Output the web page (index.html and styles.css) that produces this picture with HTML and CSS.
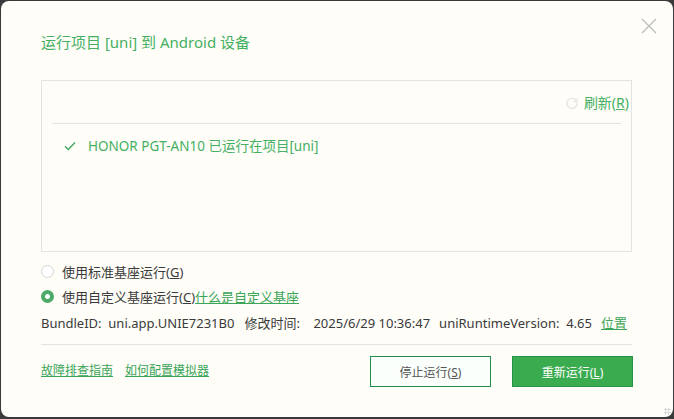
FILE: index.html
```html
<!DOCTYPE html>
<html lang="zh">
<head>
<meta charset="utf-8">
<link rel="stylesheet" href="styles.css">
</head>
<body>
<div class="dialog">
  <div class="header">
    <h1 class="title">运行项目 [uni] 到 Android 设备</h1>
    <span class="close" aria-label="close">
      <svg width="16" height="16" viewBox="0 0 16 16"><path d="M1 1L15 15M15 1L1 15" stroke="#b9b9b9" stroke-width="1.1" fill="none"/></svg>
    </span>
  </div>
  <div class="devices">
    <div class="refresh-row">
      <svg class="refresh-icon" width="12" height="12" viewBox="0 0 12 12"><path d="M10.5 4.2A5 5 0 1 0 11 6" stroke="#e6e6e2" stroke-width="1.4" fill="none"/><path d="M11 1.5V4.6H7.9" stroke="#e6e6e2" stroke-width="1.2" fill="none"/></svg>
      <span class="refresh">刷新(<u>R</u>)</span>
    </div>
    <div class="device">
      <svg class="check" width="12" height="10" viewBox="0 0 12 10"><path d="M1 5.2L4.3 8.4L11 1.4" stroke="#3faa62" stroke-width="1.4" fill="none"/></svg>
      <span class="device-name">HONOR PGT-AN10 已运行在项目[uni]</span>
    </div>
  </div>
  <div class="options">
    <label class="radio"><span class="dot"></span><span>使用标准基座运行(<u>G</u>)</span></label>
    <label class="radio"><span class="dot on"></span><span>使用自定义基座运行(<u>C</u>)<a class="link">什么是自定义基座</a></span></label>
    <div class="info">
      <span>BundleID:&nbsp; uni.app.UNIE7231B0</span>
      <span>修改时间:&nbsp;&nbsp;&nbsp; 2025/6/29 10:36:47</span>
      <span>uniRuntimeVersion:&nbsp; 4.65</span>
      <a class="link">位置</a>
    </div>
  </div>
  <div class="footer">
    <div class="links">
      <a class="link">故障排查指南</a>
      <a class="link">如何配置模拟器</a>
    </div>
    <div class="buttons">
      <button class="btn secondary">停止运行(<u>S</u>)</button>
      <button class="btn primary">重新运行(<u>L</u>)</button>
    </div>
  </div>
  <div class="grip"></div>
</div>
</body>
</html>
```
FILE: styles.css
```css
html, body {
  margin: 0;
  padding: 0;
  background: #3a3a3a;
}
body {
  width: 674px;
  height: 419px;
  overflow: hidden;
  font-family: "Noto Sans", "Noto Sans CJK SC", sans-serif;
  font-size: 13px;
  line-height: 18px;
  color: #3a3a3a;
}
.dialog {
  position: relative;
  box-sizing: border-box;
  margin: 1px 1px 0 1px;
  height: 416px;
  background: #fefdf8;
  border-radius: 8px;
  padding: 0 41px 0 40px;
  display: flex;
  flex-direction: column;
}
.header {
  height: 79px;
  display: flex;
  align-items: flex-start;
  justify-content: space-between;
}
.title {
  margin: 30px 0 0 0;
  font-size: 15px;
  font-weight: normal;
  color: #45b062;
  line-height: 22px;
}
.close {
  margin: 17px -25px 0 0;
  display: block;
}
.devices {
  height: 172px;
  box-sizing: border-box;
  border: 1px solid #e3e3e0;
  padding: 0 10px;
}
.refresh-row {
  height: 43px;
  display: flex;
  align-items: center;
  justify-content: flex-end;
  gap: 6px;
  border-bottom: 1px solid #e3e3e0;
  padding-top: 2px;
  box-sizing: border-box;
}
.refresh {
  color: #45b062;
  font-size: 14px;
  margin-right: -8px;
}
.device {
  display: flex;
  align-items: center;
  height: 44px;
  padding-left: 12px;
  color: #45b062;
  gap: 12px;
}
.device-name {
  font-size: 13.5px;
}
.options {
  padding-top: 7px;
  display: flex;
  flex-direction: column;
}
.radio {
  height: 25px;
  display: flex;
  align-items: center;
  gap: 8px;
}
.dot {
  width: 11px;
  height: 11px;
  border-radius: 50%;
  border: 1px solid #d4d4d2;
  background: #fff;
  box-sizing: content-box;
  flex: none;
}
.dot.on {
  width: 5px;
  height: 5px;
  border: 4px solid #4caa68;
  background: #fff;
}
.link {
  color: #3aa457;
  text-decoration: underline;
  cursor: pointer;
}
.info {
  height: 27px;
  display: flex;
  align-items: center;
  gap: 9px;
  white-space: nowrap;
}
.info > span:first-child {
  margin-right: 1px;
}
.footer {
  margin-top: 8px;
  border-top: 1px solid #e3e3e0;
  flex: 1;
  display: flex;
  justify-content: space-between;
  align-items: flex-start;
  padding-top: 11px;
  font-size: 12px;
}
.links {
  display: flex;
  gap: 12px;
  margin-top: 6px;
}
.buttons {
  display: flex;
  gap: 21px;
  margin-right: -1px;
}
.btn {
  width: 121px;
  height: 31px;
  box-sizing: border-box;
  font-family: inherit;
  font-size: 12px;
  padding: 0;
}
.secondary {
  background: #fafffb;
  border: 1px solid #1f8f4a;
  color: #555;
}
.primary {
  background: #3aab4f;
  border: 1px solid #23924a;
  color: #fff;
}
.grip {
  position: absolute;
  right: 2px;
  bottom: 2px;
  width: 7px;
  height: 7px;
  background: radial-gradient(circle, #d8d8d8 1px, transparent 1.2px) 0 0 / 3px 3px;
}
```
